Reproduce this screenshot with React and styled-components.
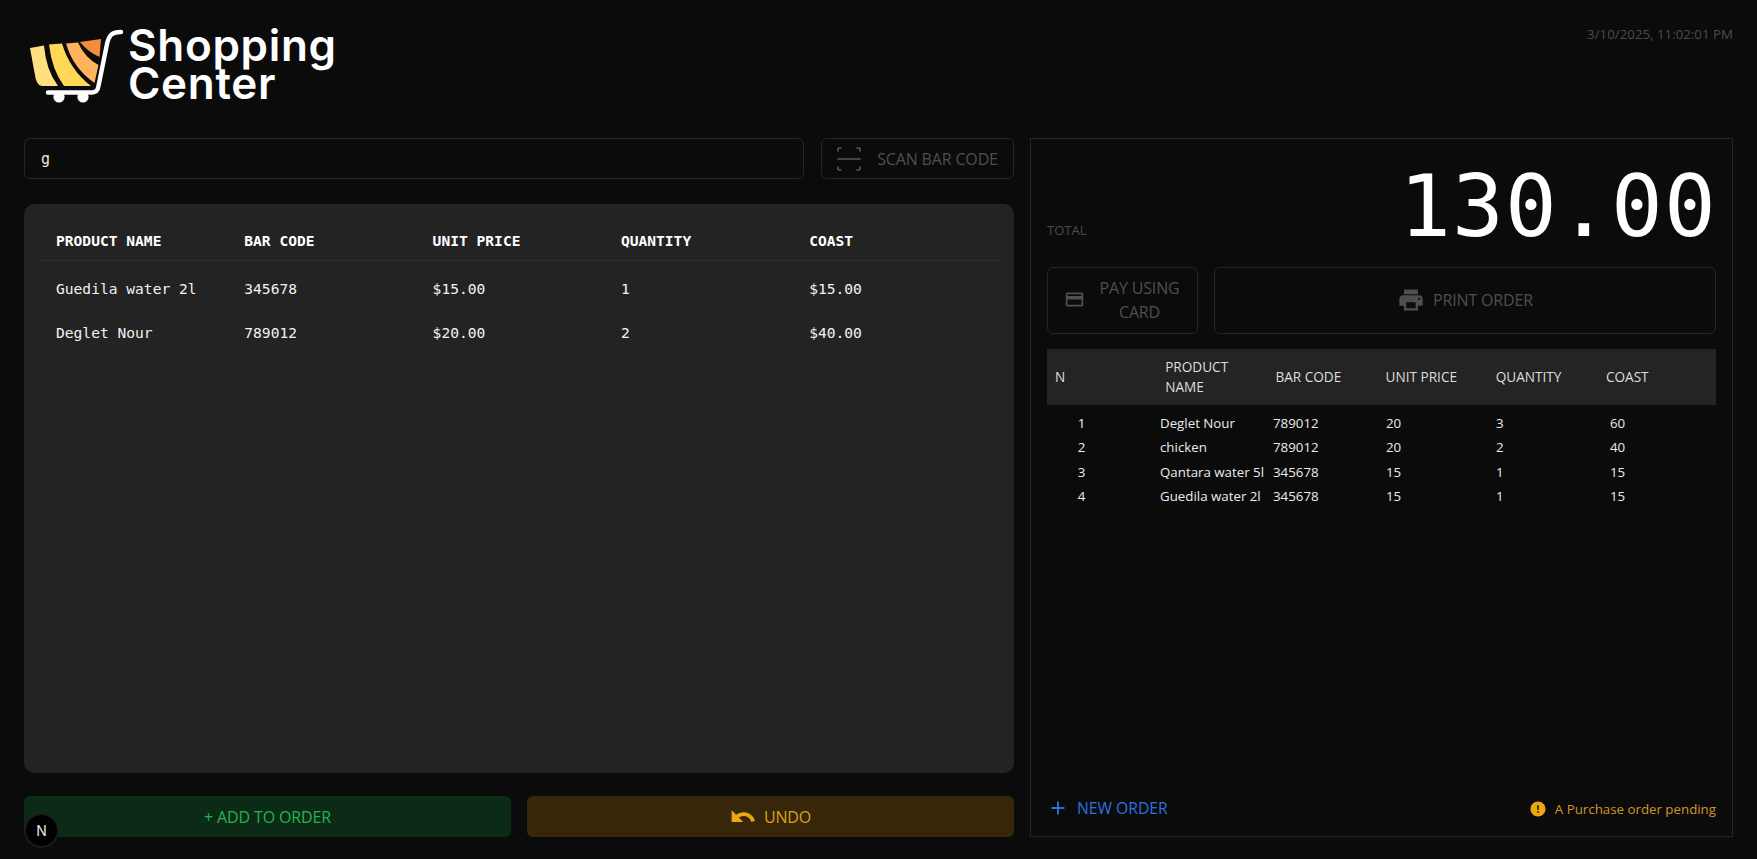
import React from "react";
import styled, { createGlobalStyle } from "styled-components";
import { MdAdd, MdCreditCard, MdError, MdPrint } from "react-icons/md";

const cartItems = [
  { name: "Guedila water 2l", code: "345678", price: "$15.00", qty: 1, cost: "$15.00" },
  { name: "Deglet Nour", code: "789012", price: "$20.00", qty: 2, cost: "$40.00" },
];

const orderItems = [
  { name: "Deglet Nour", code: "789012", price: 20, qty: 3, cost: 60 },
  { name: "chicken", code: "789012", price: 20, qty: 2, cost: 40 },
  { name: "Qantara water 5l", code: "345678", price: 15, qty: 1, cost: 15 },
  { name: "Guedila water 2l", code: "345678", price: 15, qty: 1, cost: 15 },
];

function Logo() {
  return (
    <svg width="98" height="80" viewBox="8 8 98 80" fill="none">
      <path d="M10 28 L24 25.5 Q26 50 38 66 L22 66 Q17 65 15.5 58 Z" fill="#FFE07E" />
      <path d="M29 24.5 L42 23.5 Q50 50 71 66 L44 66 Q32 50 29 24.5 Z" fill="#FFD955" />
      <path d="M46 23.5 L58 22.5 Q65 38 78.5 45 L74.5 63 Q53 48 46 23.5 Z" fill="#FFB35A" />
      <path d="M60 22 L81 19 L79.5 37 Q68 32 60 22 Z" fill="#F58C3D" />
      <path d="M101 12 C92 12 89 15 87 24 L78.5 66 Q77.5 72.5 72 72.5 L28 72.5" stroke="#fff" strokeWidth="4.4" strokeLinecap="round" />
      <circle cx="39" cy="77" r="5.6" fill="#fff" />
      <circle cx="63" cy="77" r="5.6" fill="#fff" />
    </svg>
  );
}

function ScanIcon() {
  return (
    <svg width="24" height="24" viewBox="0 0 24 24" fill="none" stroke="#5a5a5a" strokeWidth="1.6" strokeLinecap="round">
      <path d="M1 4 V2 Q1 1 2 1 H4" />
      <path d="M20 1 H22 Q23 1 23 2 V4" />
      <path d="M1 20 V22 Q1 23 2 23 H4" />
      <path d="M20 23 H22 Q23 23 23 22 V20" />
      <path d="M1 12 H23" />
    </svg>
  );
}

function UndoIcon() {
  return (
    <svg width="26" height="26" viewBox="0 0 24 24" fill="#eaa90f" stroke="#eaa90f" strokeWidth="1">
      <path d="M12.5 8c-2.65 0-5.05.99-6.9 2.6L2 7v9h9l-3.62-3.62c1.39-1.16 3.16-1.88 5.12-1.88 3.54 0 6.55 2.31 7.6 5.5l2.37-.78C21.08 11.03 17.15 8 12.5 8z" />
    </svg>
  );
}

export default function App() {
  return (
    <>
      <GlobalStyle />
      <Page>
        <Header>
          <Brand>
            <Logo />
            <BrandName>
              Shopping
              <br />
              Center
            </BrandName>
          </Brand>
          <DateText>3/10/2025, 11:02:01 PM</DateText>
        </Header>
        <Main>
          <LeftColumn>
            <SearchRow>
              <SearchInput defaultValue="g" />
              <ScanButton>
                <ScanIcon />
                SCAN BAR CODE
              </ScanButton>
            </SearchRow>
            <CartPanel>
              <CartHead>
                <span>PRODUCT NAME</span>
                <span>BAR CODE</span>
                <span>UNIT PRICE</span>
                <span>QUANTITY</span>
                <span>COAST</span>
              </CartHead>
              <CartBody>
                {cartItems.map((item) => (
                  <CartRow key={item.name}>
                    <span>{item.name}</span>
                    <span>{item.code}</span>
                    <span>{item.price}</span>
                    <span>{item.qty}</span>
                    <span>{item.cost}</span>
                  </CartRow>
                ))}
              </CartBody>
            </CartPanel>
            <ActionRow>
              <ActionButton $bg="#0c2b17" $color="#24b350">+ ADD TO ORDER</ActionButton>
              <ActionButton $bg="#38260b" $color="#d8a11a">
                <UndoIcon />
                UNDO
              </ActionButton>
            </ActionRow>
          </LeftColumn>
          <OrderPanel>
            <TotalRow>
              <TotalLabel>TOTAL</TotalLabel>
              <TotalValue>130.00</TotalValue>
            </TotalRow>
            <OrderActions>
              <PayButton>
                <MdCreditCard size={21} />
                <span>PAY USING CARD</span>
              </PayButton>
              <PrintButton>
                <MdPrint size={28} />
                PRINT ORDER
              </PrintButton>
            </OrderActions>
            <OrderHead>
              <span>N</span>
              <span>PRODUCT NAME</span>
              <span>BAR CODE</span>
              <span>UNIT PRICE</span>
              <span>QUANTITY</span>
              <span>COAST</span>
            </OrderHead>
            <OrderBody>
              {orderItems.map((item, i) => (
                <OrderRow key={item.name}>
                  <IndexCell>{i + 1}</IndexCell>
                  <NameCell>{item.name}</NameCell>
                  <span>{item.code}</span>
                  <span>{item.price}</span>
                  <span>{item.qty}</span>
                  <span>{item.cost}</span>
                </OrderRow>
              ))}
            </OrderBody>
            <OrderFooter>
              <NewOrder>
                <MdAdd size={22} />
                NEW ORDER
              </NewOrder>
              <Pending>
                <MdError size={18} />
                A Purchase order pending
              </Pending>
            </OrderFooter>
          </OrderPanel>
        </Main>
        <DevBadge>N</DevBadge>
      </Page>
    </>
  );
}

const GlobalStyle = createGlobalStyle`
  html, body {
    margin: 0;
    height: 100%;
    background: #0b0b0b;
  }
  * {
    box-sizing: border-box;
  }
`;

const Page = styled.div`
  height: 859px;
  padding: 0 24px;
  overflow: hidden;
  font-family: "Open Sans", "Noto Sans", sans-serif;
  color: #fff;
`;

const Header = styled.header`
  height: 138px;
  display: flex;
  justify-content: space-between;
  align-items: flex-start;
  padding-top: 24px;
`;

const Brand = styled.div`
  display: flex;
  gap: 2px;
  padding: 4px 0 0 4px;
`;

const BrandName = styled.div`
  font-family: "Inter", sans-serif;
  font-weight: 600;
  font-size: 44px;
  line-height: 38px;
  letter-spacing: 0.7px;
  margin-top: -2px;
`;

const DateText = styled.div`
  font-size: 13.3px;
  color: #4c4c4c;
  padding-top: 1px;
`;

const Main = styled.main`
  display: flex;
  gap: 16px;
`;

const LeftColumn = styled.div`
  width: 990px;
  display: flex;
  flex-direction: column;
`;

const SearchRow = styled.div`
  display: flex;
  gap: 17px;
  height: 41px;
`;

const SearchInput = styled.input`
  flex: 1;
  min-width: 0;
  background: transparent;
  border: 1px solid #262626;
  border-radius: 6px;
  padding: 0 16px;
  color: #e8e8e8;
  font-family: "DejaVu Sans Mono", monospace;
  font-size: 15px;
  outline: none;
`;

const ScanButton = styled.button`
  width: 193px;
  display: flex;
  align-items: center;
  justify-content: center;
  gap: 16px;
  background: transparent;
  border: 1px solid #262626;
  border-radius: 6px;
  color: #4f4f4f;
  font-family: inherit;
  font-size: 16px;
  letter-spacing: -0.15px;
  padding: 0;
  white-space: nowrap;
`;

const CartPanel = styled.section`
  margin-top: 25px;
  height: 569px;
  padding: 16px 14px 16px 16px;
  background: #232323;
  border-radius: 10px;
  font-family: "DejaVu Sans Mono", monospace;
  font-size: 14.6px;
`;

const CartHead = styled.div`
  display: grid;
  grid-template-columns: repeat(5, 188.3px);
  align-items: center;
  height: 41px;
  padding-left: 16px;
  border-bottom: 1px solid #2e2e2e;
  font-weight: 700;
  color: #fff;
`;

const CartBody = styled.div`
  padding-top: 5px;
`;

const CartRow = styled.div`
  display: grid;
  grid-template-columns: repeat(5, 188.3px);
  align-items: center;
  height: 44px;
  padding-left: 16px;
  color: #f2f2f2;
`;

const ActionRow = styled.div`
  margin-top: 23px;
  height: 41px;
  display: flex;
  gap: 16px;
`;

const ActionButton = styled.button`
  flex: 1;
  display: flex;
  align-items: center;
  justify-content: center;
  gap: 8px;
  background: ${(p) => p.$bg};
  color: ${(p) => p.$color};
  border: none;
  border-radius: 6px;
  font-family: inherit;
  font-size: 16px;
  letter-spacing: -0.15px;
`;

const OrderPanel = styled.section`
  width: 703px;
  height: 699px;
  display: flex;
  flex-direction: column;
  padding: 0 16px;
  border: 1px solid #262626;
`;

const TotalRow = styled.div`
  height: 128px;
  display: flex;
  justify-content: space-between;
  align-items: flex-end;
  padding-bottom: 24px;
`;

const TotalLabel = styled.div`
  font-size: 13px;
  color: #4c4c4c;
  padding-bottom: 4px;
`;

const TotalValue = styled.div`
  font-family: "DejaVu Sans Mono", monospace;
  font-size: 86px;
  letter-spacing: 1.2px;
  line-height: 90px;
  margin: 0 -1px -8px 0;
  color: #fff;
`;

const OrderActions = styled.div`
  display: flex;
  gap: 16px;
  height: 67px;
`;

const MutedButton = styled.button`
  display: flex;
  align-items: center;
  justify-content: center;
  background: transparent;
  border: 1px solid #262626;
  border-radius: 6px;
  color: #4f4f4f;
  font-family: inherit;
  font-size: 16px;
  letter-spacing: -0.15px;
  line-height: 24px;
  padding: 0 0 2px;
`;

const PayButton = styled(MutedButton)`
  width: 151px;
  gap: 12px;
  padding: 0 15px 2px 16px;
  svg {
    flex: none;
  }
  span {
    text-align: center;
  }
`;

const PrintButton = styled(MutedButton)`
  flex: 1;
  gap: 8px;
`;

const OrderHead = styled.div`
  margin-top: 15px;
  height: 56px;
  display: grid;
  grid-template-columns: repeat(6, 110.2px);
  align-items: center;
  padding-left: 8px;
  background: #242424;
  color: #dedede;
  font-size: 13.6px;
  line-height: 20px;
  span {
    max-width: 80px;
  }
`;

const OrderBody = styled.div`
  padding-top: 6px;
  font-size: 13.3px;
  color: #ececec;
`;

const OrderRow = styled.div`
  display: grid;
  grid-template-columns: 113px 113px 113px 110px 114px 1fr;
  align-items: center;
  height: 24.3px;
`;

const IndexCell = styled.span`
  text-align: center;
  padding-left: 1px;
  width: 68px;
`;

const NameCell = styled.span`
  white-space: nowrap;
`;

const OrderFooter = styled.div`
  margin-top: auto;
  height: 47px;
  display: flex;
  justify-content: space-between;
  align-items: flex-start;
  padding-top: 8px;
`;

const NewOrder = styled.div`
  display: flex;
  align-items: center;
  gap: 8px;
  font-size: 15.7px;
  color: #2f6fe0;
`;

const Pending = styled.div`
  display: flex;
  align-items: center;
  gap: 8px;
  padding-top: 3px;
  font-size: 13.3px;
  color: #d2952a;
  svg {
    color: #eaa80c;
  }
`;

const DevBadge = styled.div`
  position: fixed;
  left: 24px;
  bottom: 11px;
  width: 35px;
  height: 35px;
  display: flex;
  align-items: center;
  justify-content: center;
  border-radius: 50%;
  background: #000;
  border: 2px solid #1c1c1c;
  color: #e4e4e4;
  font-size: 14px;
  font-family: "Inter", sans-serif;
`;
